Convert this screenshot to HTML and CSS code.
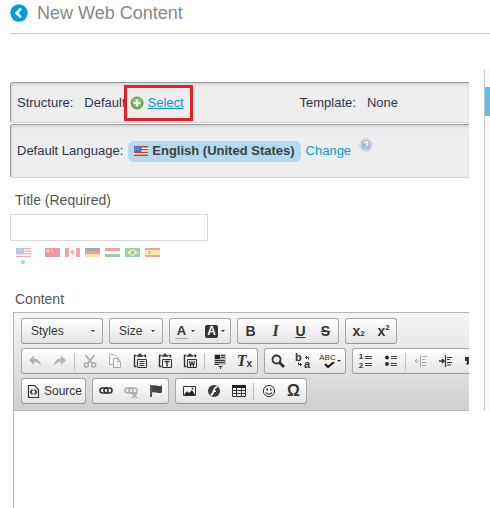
FILE: index.html
```html
<!DOCTYPE html>
<html lang="en">
<head>
<meta charset="utf-8">
<title>New Web Content</title>
<link rel="stylesheet" href="styles.css">
</head>
<body>
<header class="page-header">
  <a class="back" href="#" aria-label="Back">
    <svg width="18" height="18" viewBox="0 0 18 18"><circle cx="9" cy="9" r="8.7" fill="#009ae5"/><path d="M11 4.6 6.6 9 11 13.4" fill="none" stroke="#fff" stroke-width="2.6"/></svg>
  </a>
  <h1>New Web Content</h1>
</header>
<div class="layout">
<main class="main">
  <section class="panel panel-structure">
    <div class="field">
      <span class="name">Structure:</span>
      <span>Default</span>
      <span class="select-wrap">
        <svg width="14" height="14" viewBox="0 0 14 14"><circle cx="7" cy="7" r="6" fill="#6fb356" stroke="#4f9440"/><circle cx="7" cy="6" r="4.6" fill="#93cc78" opacity=".7"/><path d="M7 3.6v6.8M3.6 7h6.8" stroke="#fff" stroke-width="2.2"/></svg>
        <a class="select" href="#">Select</a>
      </span>
    </div>
    <div class="field">
      <span class="name">Template:</span>
      <span>None</span>
    </div>
  </section>
  <section class="panel panel-language">
    <span>Default Language:</span>
    <span class="pill"><svg width="14" height="10" viewBox="0 0 15 10"><use href="#flag-us"/></svg>English (United States)</span>
    <a class="change" href="#">Change</a>
    <button class="help" type="button" aria-label="Help"><svg width="14" height="14" viewBox="0 0 14 14"><circle cx="7" cy="7" r="6.3" fill="#d5dee9" stroke="#c3cfde" stroke-width=".8"/><circle cx="7" cy="7" r="4.8" fill="#a5b9d3"/><path d="M5.2 5.7c0-2.3 3.7-2.2 3.7 0 0 1.2-1.8 1.2-1.8 2.4M7.1 9.2v1.3" fill="none" stroke="#fff" stroke-width="1.3"/></svg></button>
  </section>

  <label class="label" for="title">Title (Required)</label>
  <input class="title-input" id="title" type="text">
  <div class="flags">
    <span class="flag current"><svg width="15" height="9" viewBox="0 0 15 10" preserveAspectRatio="none"><use href="#flag-us"/></svg></span>
    <span class="flag"><svg width="15" height="9"><path fill="#c60b0b" d="M0 0h15v9H0z"/><path fill="#ffd83b" d="m3 1 .6 1.3H5L4 3.2l.4 1.4L3 3.8l-1.3.8.3-1.4-1-.9h1.4zM6 1h1v1H6zM7 3h1v1H7z"/></svg></span>
    <span class="flag"><svg width="15" height="9"><path fill="#fff" d="M0 0h15v9H0z"/><path fill="#dd2222" d="M0 0h4v9H0zM11 0h4v9h-4zM7.5 1.5l.8 1.2 1.5.3-1 2-.9.4v1.6h-.8V5.4L6 5 5.2 3l1.5-.3z"/></svg></span>
    <span class="flag"><svg width="15" height="9"><path fill="#222" d="M0 0h15v3H0z"/><path fill="#d01515" d="M0 3h15v3H0z"/><path fill="#f1b51c" d="M0 6h15v3H0z"/></svg></span>
    <span class="flag"><svg width="15" height="9"><path fill="#c82020" d="M0 0h15v3H0z"/><path fill="#fff" d="M0 3h15v3H0z"/><path fill="#187a38" d="M0 6h15v3H0z"/></svg></span>
    <span class="flag"><svg width="15" height="9"><path fill="#178a2e" d="M0 0h15v9H0z"/><path fill="#f6df3a" d="M7.5 1 13 4.500 7.500 8 2 4.500z"/><circle cx="7.500" cy="4.500" r="2" fill="#234b9c"/></svg></span>
    <span class="flag"><svg width="15" height="9"><path fill="#d81c1c" d="M0 0h15v9H0z"/><path fill="#ffd531" d="M0 2h15v5H0z"/><path fill="#c36b25" d="M3 3h3v3H3z"/></svg></span>
  </div>

  <label class="label label-content" for="content">Content</label>
  <div class="editor">
    <div class="toolbar">
      <div class="row">
        <button class="group combo combo-styles" type="button">Styles<i class="arrow"></i></button>
        <button class="group combo combo-size" type="button">Size<i class="arrow"></i></button>
        <div class="group">
          <button class="tool wide color" type="button"><span class="fg">A</span><i class="arrow"></i></button>
          <button class="tool wide color" type="button"><span class="bg">A</span><i class="arrow"></i></button>
        </div>
        <div class="group">
          <button class="tool glyph" type="button"><b>B</b></button>
          <button class="tool glyph" type="button"><em>I</em></button>
          <button class="tool glyph" type="button"><u>U</u></button>
          <button class="tool glyph" type="button"><s>S</s></button>
        </div>
        <div class="group">
          <button class="tool script" type="button">x<sub>2</sub></button>
          <button class="tool script" type="button">x<sup>2</sup></button>
        </div>
      </div>
      <div class="row">
        <div class="group">
          <button class="tool off" type="button" aria-label="Undo"><svg class="ic" viewBox="0 0 16 16"><path d="M7 2.500 2 7.200 7 12V9c3 0 5 .8 7 4-.3-4.500-2.500-7.300-7-7.600z" fill="#444"/></svg></button>
          <button class="tool off" type="button" aria-label="Redo"><svg class="ic" viewBox="0 0 16 16"><path d="m9 2.500 5 4.700L9 12V9c-3 0-5 .8-7 4 .3-4.500 2.500-7.300 7-7.600z" fill="#444"/></svg></button>
          <i class="sep"></i>
          <button class="tool off" type="button" aria-label="Cut"><svg class="ic" viewBox="0 0 16 16" fill="none" stroke="#333"><path d="m3.500 2 6.800 8.500M12.500 2 5.700 10.500" stroke-width="1.800"/><circle cx="4.300" cy="12" r="2" stroke-width="1.500"/><circle cx="11.700" cy="12" r="2" stroke-width="1.500"/></svg></button>
          <button class="tool off" type="button" aria-label="Copy"><svg class="ic" viewBox="0 0 16 16" fill="#f4f4f4" stroke="#333"><path d="M2.500 1.500h5l3 3v7h-8z"/><path d="M6.500 5.500h4l3 3v6h-7zM10.500 5.500v3h3"/></svg></button>
          <button class="tool" type="button" aria-label="Paste"><svg class="ic" viewBox="0 0 16 16" fill="none" stroke="#333"><use href="#clip"/><path d="M7.500 8.500h5M7.500 10.500h5M7.500 12.500h5"/></svg></button>
          <button class="tool" type="button" aria-label="Paste as plain text"><svg class="ic" viewBox="0 0 16 16" fill="none" stroke="#333"><use href="#clip"/><path d="M7.500 8.500h5M10 8.500v5" stroke-width="1.400"/></svg></button>
          <button class="tool" type="button" aria-label="Paste from Word"><svg class="ic" viewBox="0 0 16 16" fill="none" stroke="#333"><use href="#clip"/><path d="m7.500 8 1 5 1.500-4 1.500 4 1-5" stroke-width="1.200"/></svg></button>
          <i class="sep"></i>
          <button class="tool" type="button" aria-label="Templates"><svg class="ic" viewBox="0 0 16 16"><path fill="#bbb" d="M2 1h12v11H2z"/><path fill="#222" d="M3 2h5v4H3z"/><path d="M9 2.500h4M9 4.500h4M3 7.500h10M3 9.500h10M3 11.500h4M6.500 13.500h4M8.500 13v3" stroke="#333"/></svg></button>
          <button class="tool clear" type="button"><em>T</em><sub>x</sub></button>
        </div>
        <div class="group">
          <button class="tool" type="button" aria-label="Find"><svg class="ic" viewBox="0 0 16 16" fill="none" stroke="#333"><circle cx="6.500" cy="6.500" r="4" stroke-width="1.800"/><path d="m9.500 9.500 4.500 4.500" stroke-width="2.800"/></svg></button>
          <button class="tool replace" type="button"><span>b</span><svg width="14" height="14" viewBox="0 0 14 14" fill="none" stroke="#333"><path d="M12.500 5.500v-2h-3M11 2 9.500 3.500 11 5M2.500 8.500v2h3M4 9l1.500 1.500L4 12"/></svg><span>a</span></button>
          <button class="tool wide spell" type="button"><span>ABC<svg width="12" height="7" viewBox="0 0 12 7"><path d="m2 2 3 3 6-5" fill="none" stroke="#222" stroke-width="2.200"/></svg></span><i class="arrow"></i></button>
        </div>
        <div class="group">
          <button class="tool list" type="button"><span class="nums"><span>1</span><span>2</span></span><svg width="7" height="12" viewBox="0 0 7 12"><path d="M0 1.500h7M0 3.500h7M0 8.500h7M0 10.500h7" stroke="#444"/></svg></button>
          <button class="tool" type="button" aria-label="Bulleted list"><svg class="ic" viewBox="0 0 16 16"><circle cx="4" cy="4.500" r="1.900" fill="#222"/><circle cx="4" cy="11" r="1.900" fill="#222"/><path d="M8 3.500h6M8 5.500h6M8 10.500h6M8 12.500h6" stroke="#444"/></svg></button>
          <i class="sep"></i>
          <button class="tool off" type="button" aria-label="Decrease indent"><svg class="ic" viewBox="0 0 16 16"><path d="M7.500 2v12M9 3.500h5M9 6.500h3M9 9.500h5M9 12.500h4" stroke="#333"/><path d="M2 8h4M4 6 2 8l2 2" stroke="#333" fill="none"/></svg></button>
          <button class="tool" type="button" aria-label="Increase indent"><svg class="ic" viewBox="0 0 16 16"><path d="M7.500 2v12M9 4.500h5M9 6.500h3M9 9.500h5M9 12h4" stroke="#333" stroke-width="1.200"/><path d="M1 8h5M4 6l2 2-2 2" stroke="#333" fill="none" stroke-width="1.500"/></svg></button>
          <button class="tool" type="button" aria-label="Block quote"><svg class="ic" viewBox="0 0 16 16"><path d="M2 4h5v4c0 2-1 3-3 4l-1-1c1-1 1-2 1-3H2zM9 4h5v4c0 2-1 3-3 4l-1-1c1-1 1-2 1-3H9z" fill="#333"/></svg></button>
        </div>
      </div>
      <div class="row">
        <button class="group source" type="button"><svg class="ic" viewBox="0 0 16 16" fill="none" stroke="#333"><path d="M3.500 2.500h6l4 4v8h-10z" stroke-width="1.200"/><path d="M7.500 6.500 5.500 9l2 2.500M9.500 6.500l2 2.500-2 2.500" stroke-width="1.500"/></svg>Source</button>
        <div class="group">
          <button class="tool" type="button" aria-label="Link"><svg class="ic" viewBox="0 0 16 16" fill="none" stroke="#333" stroke-width="1.600"><use href="#chain"/></svg></button>
          <button class="tool off" type="button" aria-label="Unlink"><svg class="ic" viewBox="0 0 16 16" fill="none" stroke="#333" stroke-width="1.600"><use href="#chain"/><path d="m9 10 5 5M14 10l-5 5"/></svg></button>
          <button class="tool" type="button" aria-label="Anchor"><svg class="ic" viewBox="0 0 16 16"><path d="M3 2v12" stroke="#222" stroke-width="1.500"/><path d="M4 2.500c3-1 5 1.500 10 0v7c-5 1.500-7-1-10 0z" fill="#444"/></svg></button>
        </div>
        <div class="group">
          <button class="tool" type="button" aria-label="Image"><svg class="ic" viewBox="0 0 16 16"><path d="M2.500 3.500h12v9h-12z" fill="#fff" stroke="#333"/><path d="m3 12 3-4 2 2 3-3 3 5z" fill="#222"/><circle cx="11.500" cy="5.500" r="1" fill="#333"/></svg></button>
          <button class="tool" type="button" aria-label="Flash"><svg class="ic" viewBox="0 0 16 16"><circle cx="8" cy="8" r="6" fill="#3b3b3b"/><path d="M11.500 4C8 4 8 7 7.500 8.500 7 11 6 12 4.500 12M6.500 8.300h3.500" fill="none" stroke="#fff" stroke-width="1.600"/></svg></button>
          <button class="tool" type="button" aria-label="Table"><svg class="ic" viewBox="0 0 16 16"><path d="M1.500 2.500h13v11h-13zM2 7.500h12M2 10.500h12M5.500 4v9M10.500 4v9" fill="none" stroke="#333"/><path fill="#222" d="M1 2h14v3H1z"/></svg></button>
          <i class="sep"></i>
          <button class="tool" type="button" aria-label="Smiley"><svg class="ic" viewBox="0 0 16 16" fill="none" stroke="#333"><circle cx="8" cy="8" r="5.600"/><path d="M5.500 5.500h1.500v2H5.500zM9 5.500h1.500v2H9z" fill="#333" stroke="none"/><path d="M5 9.500c1.500 2.300 4.500 2.300 6 0" stroke-width="1.200"/></svg></button>
          <button class="tool omega" type="button">Ω</button>
        </div>
      </div>
    </div>
    <textarea class="body-text" id="content"></textarea>
  </div>
</main>
<aside class="side"><span class="marker"></span></aside>
</div>
<svg class="defs" width="0" height="0" aria-hidden="true">
  <defs>
    <g id="flag-us"><path fill="#fff" d="M0 0h15v10H0z"/><path d="M0 .5h15M0 3.500h15M0 6.500h15M0 9.500h15" stroke="#d8352c" stroke-width="1.500"/><path fill="#3d6fc9" d="M0 0h8v6H0z"/><path d="M1 1.500h6M1 3.500h6" stroke="#b9cdf0" stroke-dasharray="1 1"/></g>
    <g id="clip"><path d="M4.500 13.500h-2v-11h2M11.500 2.500h2v2" stroke-width="1.400"/><path d="M5 3h6M6.500 1.500h3" stroke-width="1.400"/><path d="M5.500 6.500h9v8h-9z"/></g>
    <g id="chain"><rect x="2" y="5" width="8" height="5" rx="2.500"/><rect x="6" y="5" width="8" height="5" rx="2.500"/></g>
  </defs>
</svg>
</body>
</html>
```
FILE: styles.css
```css
* { box-sizing: border-box; }

body {
  margin: 0;
  min-height: 100vh;
  display: flex;
  flex-direction: column;
  background: #fff;
  color: #30344e;
  font: 13px/16px "Liberation Sans", Arial, sans-serif;
}

button {
  margin: 0;
  padding: 0;
  border: 0;
  background: none;
  color: #333;
  font: inherit;
}

svg { display: block; flex: none; }
.defs { position: absolute; }

a { color: #009ae5; text-decoration: none; }

.page-header {
  display: flex;
  align-items: center;
  gap: 9px;
  height: 34px;
  margin-left: 10px;
  padding-bottom: 7px;
  border-bottom: 1px solid #c8c8c8;
}

h1 {
  margin: 0;
  color: #888;
  font-size: 18px;
  line-height: 24px;
  font-weight: 400;
}

.layout {
  flex: 1;
  display: flex;
  gap: 15px;
  padding-left: 10px;
}

.main {
  flex: 1;
  min-width: 0;
  display: flex;
  flex-direction: column;
  padding-top: 48px;
  overflow: hidden;
}

.side {
  width: 6px;
  height: 341px;
  margin-top: 36px;
  padding-top: 17px;
  border-left: 1px solid #c8c8c8;
  background: #fcfcfc;
}

.marker { display: block; height: 29px; background: #5fbcec; }

.panel {
  padding-left: 6px;
  border: 1px solid #999;
  border-right: 0;
  border-bottom-color: #d4d4d4;
  border-radius: 3px 0 0 3px;
  background: #eee;
  box-shadow: inset 1px 2px 3px #d4d4d4;
}

.panel-structure {
  display: grid;
  grid-template-columns: 5fr 3fr;
  align-items: center;
  height: 41px;
  margin-bottom: 1px;
}

.field { display: flex; align-items: center; }
.name { margin-right: 11px; }

.select-wrap {
  position: relative;
  display: flex;
  align-items: center;
  gap: 4px;
  margin-left: 4px;
}

.select-wrap::after {
  content: "";
  position: absolute;
  inset: -10px -9px -10px -6px;
  border: 3px solid #ec1c24;
  pointer-events: none;
}

.select { text-decoration: underline; }

.panel-language {
  display: flex;
  align-items: center;
  height: 54px;
}

.pill {
  display: flex;
  align-items: center;
  gap: 4px;
  height: 21px;
  margin: 0 5px;
  padding: 0 6px;
  border-radius: 6px;
  background: #b3daf0;
  color: #404040;
  font-weight: 700;
}

.help { align-self: flex-start; margin: 13px 0 0 8px; }

.label {
  margin: 14px 0 0 5px;
  color: #555;
  font-size: 14px;
  line-height: 16px;
}

.title-input {
  width: 198px;
  height: 27px;
  margin-top: 6px;
  border: 1px solid #d8d8d8;
  background: #fff;
}

.flags {
  display: flex;
  gap: 5px;
  margin: 7px 0 0 6px;
  height: 16px;
}

.flag { opacity: .4; }
.current { position: relative; margin-right: 9px; }

.current::after {
  content: "";
  position: absolute;
  left: 5px;
  top: 12px;
  width: 4px;
  height: 4px;
  border-radius: 2px;
  background: #009ae5;
}

.label-content { margin-top: 27px; }

.editor {
  flex: 1;
  display: flex;
  flex-direction: column;
  margin: 5px 0 0 3px;
  border: 1px solid #b6b6b6;
  border-width: 1px 0 0 1px;
}

.toolbar {
  display: flex;
  flex-direction: column;
  gap: 4px;
  padding: 5px 0 6px 7px;
  border-bottom: 1px solid #b6b6b6;
  background: linear-gradient(#f5f5f5, #cfd1cf);
  overflow: hidden;
}

.row { display: flex; gap: 6px; }

.group {
  flex: none;
  display: flex;
  align-items: center;
  height: 26px;
  border: 1px solid #a6a6a6;
  border-bottom-color: #979797;
  border-radius: 3px;
  background: linear-gradient(#fff, #e4e4e4);
}

.combo { justify-content: space-between; padding: 0 7px 0 9px; font-size: 12px; }
.combo-styles { width: 82px; }
.combo-size { width: 54px; }

.arrow {
  width: 0;
  border: 2px solid transparent;
  border-top-color: #333;
  border-bottom: 0;
}

.tool {
  display: flex;
  align-items: center;
  justify-content: center;
  width: 25px;
  height: 24px;
}

.wide { width: 30px; gap: 3px; }
.off { opacity: .35; }
.ic { width: 16px; height: 16px; }
.sep { width: 1px; height: 17px; margin: 0 2px; background: #bbb; }

.glyph { font-size: 14px; font-weight: 700; }
.glyph em { font-family: "Liberation Serif", serif; font-size: 16px; }

.color { font-weight: 700; }
.fg { padding: 0 2px; border-bottom: 1px solid #aaa; line-height: 14px; }
.bg { width: 13px; border-radius: 2px; background: #333; color: #fff; font-size: 12px; line-height: 13px; }

.script { font-size: 14px; font-weight: 700; }
.script sub, .script sup { margin: 5px 0; font-size: 8px; line-height: 8px; }
.script sub { align-self: flex-end; }
.script sup { align-self: flex-start; }

.clear { font: 700 16px/16px "Liberation Serif", serif; }
.clear sub { align-self: flex-end; margin-bottom: 4px; font: 700 10px/10px "Liberation Sans", sans-serif; }

.replace { position: relative; }
.replace span { position: absolute; font-size: 11px; font-weight: 700; line-height: 11px; }
.replace span:first-child { left: 5px; top: 3px; }
.replace span:last-child { right: 5px; bottom: 3px; }

.spell { font-size: 8px; line-height: 8px; gap: 1px; }
.spell svg { margin-left: 4px; }

.list { gap: 2px; font-size: 8px; font-weight: 700; line-height: 8px; }
.nums { display: grid; gap: 1px; line-height: 8px; }

.source { gap: 3px; width: 65px; padding-left: 3px; font-size: 12px; }

.omega { font-size: 16px; font-weight: 700; }

.body-text {
  flex: 1;
  width: 100%;
  min-height: 97px;
  border: 0;
  background: #fff;
  outline: 0;
  resize: none;
}
```
